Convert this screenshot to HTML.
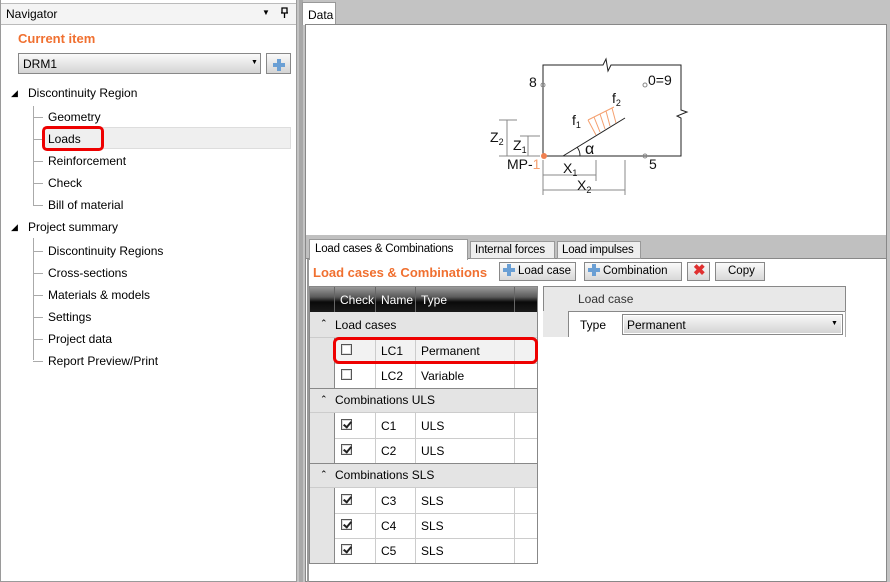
<!DOCTYPE html>
<html><head><meta charset="utf-8"><style>
*{box-sizing:border-box;margin:0;padding:0}
body{width:890px;height:582px;background:#c3c3c3;font-family:"Liberation Sans",sans-serif;font-size:12px;color:#000;position:relative;overflow:hidden}
.a{position:absolute;white-space:nowrap}
.hdr{background:linear-gradient(#9a9a9a,#5a5a5a 40%,#0a0a0a 60%,#1a1a1a)}
.cb{position:absolute;width:11px;height:11px;border:1px solid #555;background:#fff;box-shadow:inset 0 0 0 1px #ddd}
.cb.c::after{content:"";position:absolute;left:3px;top:0px;width:3px;height:6px;border:solid #222;border-width:0 2px 2px 0;transform:rotate(40deg)}
.btn{position:absolute;height:19px;border:1px solid #888;background:linear-gradient(#fafafa,#d8d8d8);font-size:11.5px;line-height:17px;padding-left:3px}
.plus{display:inline-block;position:relative;width:12px;height:12px;vertical-align:-2px;margin-right:3px}
.plus::before{content:"";position:absolute;left:4px;top:0;width:4px;height:12px;background:#6a9fd4}
.plus::after{content:"";position:absolute;left:0;top:4px;width:12px;height:4px;background:#6a9fd4}
.tab{font-size:11.5px;letter-spacing:-0.2px}
</style></head><body>
<!-- Navigator -->
<div class="a" style="left:0;top:0;width:297px;height:582px;background:#fff;border:1px solid #9a9a9a;border-top:none"></div>
<div class="a" style="left:1px;top:3px;width:295px;height:22px;background:#f4f4f4;border:1px solid #bbb;border-left:none;border-right:none"></div>
<div class="a" style="left:6px;top:7px">Navigator</div>
<div class="a" style="left:262px;top:8px;font-size:8px">▼</div>
<svg class="a" style="left:280px;top:7px" width="10" height="12"><path d="M2 1H7V6H2ZM1 6H8M4.5 6V11" fill="none" stroke="#000" stroke-width="1.3"/></svg>
<div class="a" style="left:18px;top:31px;color:#f07030;font-weight:bold;font-size:13px">Current item</div>
<div class="a" style="left:18px;top:53px;width:243px;height:21px;border:1px solid #888;background:linear-gradient(#fafafa,#d4d4d4);padding:3px 0 0 4px">DRM1</div>
<div class="a" style="left:251px;top:59px;font-size:7px">▼</div>
<div class="a" style="left:266px;top:53px;width:25px;height:21px;border:1px solid #888;background:linear-gradient(#fafafa,#d4d4d4);padding:4px 0 0 6px"><span class="plus"></span></div>
<div class="a" style="left:11px;top:88px;font-size:9px">◢</div>
<div class="a" style="left:28px;top:86px">Discontinuity Region</div>
<div class="a" style="left:33px;top:106px;width:1px;height:99px;background:#aaa"></div>
<div class="a" style="left:33px;top:117px;width:10px;height:1px;background:#aaa"></div>
<div class="a" style="left:33px;top:139px;width:10px;height:1px;background:#aaa"></div>
<div class="a" style="left:33px;top:161px;width:10px;height:1px;background:#aaa"></div>
<div class="a" style="left:33px;top:183px;width:10px;height:1px;background:#aaa"></div>
<div class="a" style="left:33px;top:205px;width:10px;height:1px;background:#aaa"></div>
<div class="a" style="left:43px;top:127px;width:248px;height:22px;background:#efefef;border:1px solid #ddd"></div>
<div class="a" style="left:48px;top:110px">Geometry</div>
<div class="a" style="left:42px;top:126px;width:62px;height:25px;border:3px solid #e00;border-radius:5px"></div>
<div class="a" style="left:48px;top:132px">Loads</div>
<div class="a" style="left:48px;top:154px">Reinforcement</div>
<div class="a" style="left:48px;top:176px">Check</div>
<div class="a" style="left:48px;top:198px">Bill of material</div>
<div class="a" style="left:11px;top:222px;font-size:9px">◢</div>
<div class="a" style="left:28px;top:220px">Project summary</div>
<div class="a" style="left:33px;top:238px;width:1px;height:122px;background:#aaa"></div>
<div class="a" style="left:33px;top:251px;width:10px;height:1px;background:#aaa"></div>
<div class="a" style="left:33px;top:273px;width:10px;height:1px;background:#aaa"></div>
<div class="a" style="left:33px;top:295px;width:10px;height:1px;background:#aaa"></div>
<div class="a" style="left:33px;top:317px;width:10px;height:1px;background:#aaa"></div>
<div class="a" style="left:33px;top:339px;width:10px;height:1px;background:#aaa"></div>
<div class="a" style="left:33px;top:361px;width:10px;height:1px;background:#aaa"></div>
<div class="a" style="left:48px;top:244px">Discontinuity Regions</div>
<div class="a" style="left:48px;top:266px">Cross-sections</div>
<div class="a" style="left:48px;top:288px">Materials &amp; models</div>
<div class="a" style="left:48px;top:310px">Settings</div>
<div class="a" style="left:48px;top:332px">Project data</div>
<div class="a" style="left:48px;top:354px">Report Preview/Print</div>
<!-- right -->
<div class="a" style="left:299px;top:0;width:4px;height:582px;background:#a8a8a8"></div>
<div class="a" style="left:302px;top:2px;width:34px;height:23px;background:#fff;border:1px solid #999;border-bottom:none;padding:5px 0 0 5px">Data</div>
<div class="a" style="left:305px;top:24px;width:582px;height:558px;background:#fff;border:1px solid #888"></div>
<div class="a" style="left:306px;top:235px;width:580px;height:6px;background:#c0c0c0"></div>
<div class="a" style="left:306px;top:241px;width:580px;height:18px;background:#c0c0c0;border-bottom:1px solid #888"></div>
<div class="a tab" style="left:309px;top:239px;width:159px;height:21px;background:#fff;border:1px solid #999;border-bottom:none;padding:3px 0 0 5px">Load cases &amp; Combinations</div>
<div class="a tab" style="left:470px;top:241px;width:85px;height:18px;background:#eee;border:1px solid #999;padding:2px 0 0 4px">Internal forces</div>
<div class="a tab" style="left:557px;top:241px;width:84px;height:18px;background:#eee;border:1px solid #999;padding:2px 0 0 4px">Load impulses</div>
<div class="a" style="left:307px;top:259px;width:2px;height:323px;background:#999"></div>
<svg class="a" style="left:0;top:0" width="890" height="240">
<g fill="none" stroke="#222" stroke-width="1">
<path d="M543 65H603l3-6 2 12 3-6H681V110l6 2-10 4 4 2V156H543Z"/>
<path d="M563 156L625 118"/>
<path d="M577 147A14 14 0 0 1 580 156"/>
</g>
<g stroke="#888" fill="none">
<circle cx="543" cy="85" r="2"/><circle cx="645" cy="85" r="2"/><circle cx="645" cy="156" r="2"/>
<path d="M543 160V195M596 160V181M625 160V195M543 175H596M543 190H625M499 120H517M507 120V156M520 136H540M528 136V156M499 156H540"/>
</g>
<g stroke="#f5a070" fill="none">
<path d="M588 120L614 107M588 120L596 135M594 117L600 132M600 114L605 129M606 111L610 126M612 108L616 123"/>
</g>
<circle cx="544" cy="156" r="3" fill="#f08050"/>
<g font-family="Liberation Sans,sans-serif" font-size="14" fill="#111">
<text x="529" y="87">8</text><text x="648" y="85">0=9</text><text x="649" y="169">5</text>
<text x="572" y="125">f<tspan font-size="9" dy="3">1</tspan></text>
<text x="612" y="103">f<tspan font-size="9" dy="3">2</tspan></text>
<text x="585" y="154" font-size="16">α</text>
<text x="490" y="142">Z<tspan font-size="9" dy="3">2</tspan></text>
<text x="513" y="150">Z<tspan font-size="9" dy="3">1</tspan></text>
<text x="507" y="169">MP-<tspan fill="#f5a070">1</tspan></text>
<text x="563" y="173">X<tspan font-size="9" dy="3">1</tspan></text>
<text x="577" y="190">X<tspan font-size="9" dy="3">2</tspan></text>
</g>
</svg>
<div class="a" style="left:313px;top:265px;color:#f07030;font-weight:bold;font-size:13px">Load cases &amp; Combinations</div>
<div class="btn" style="left:499px;top:262px;width:77px"><span class="plus"></span>Load case</div>
<div class="btn" style="left:584px;top:262px;width:98px"><span class="plus"></span>Combination</div>
<div class="btn" style="left:687px;top:262px;width:23px;color:#e03030;font-weight:bold;font-size:15px;line-height:16px;padding-left:5px">✖</div>
<div class="btn" style="left:715px;top:262px;width:50px;padding-left:12px">Copy</div>
<!-- grid -->
<div class="a" style="left:309px;top:286px;width:229px;height:278px;border:1px solid #888;background:#fff"></div>
<div class="a hdr" style="left:310px;top:287px;width:227px;height:25px"></div>
<div class="a" style="left:334px;top:287px;width:1px;height:25px;background:#666"></div>
<div class="a" style="left:375px;top:287px;width:1px;height:25px;background:#666"></div>
<div class="a" style="left:415px;top:287px;width:1px;height:25px;background:#666"></div>
<div class="a" style="left:514px;top:287px;width:1px;height:25px;background:#666"></div>
<div class="a" style="left:340px;top:293px;color:#fff">Check</div>
<div class="a" style="left:381px;top:293px;color:#fff">Name</div>
<div class="a" style="left:421px;top:293px;color:#fff">Type</div>
<div class="a" style="left:310px;top:312px;width:24px;height:251px;background:#e4e4e4"></div>
<div class="a" style="left:310px;top:312px;width:227px;height:26px;background:#e4e4e4;border-bottom:1px solid #ccc"></div>
<div class="a" style="left:310px;top:388px;width:227px;height:25px;background:#e4e4e4;border-top:1px solid #888;border-bottom:1px solid #ccc"></div>
<div class="a" style="left:310px;top:463px;width:227px;height:25px;background:#e4e4e4;border-top:1px solid #888;border-bottom:1px solid #ccc"></div>
<div class="a" style="left:320px;top:318px;font-size:9px">⌃</div><div class="a" style="left:335px;top:318px">Load cases</div>
<div class="a" style="left:320px;top:394px;font-size:9px">⌃</div><div class="a" style="left:335px;top:393px">Combinations ULS</div>
<div class="a" style="left:320px;top:469px;font-size:9px">⌃</div><div class="a" style="left:335px;top:468px">Combinations SLS</div>
<!-- rows -->
<div class="a" style="left:334px;top:338px;width:203px;height:25px;background:#f2f2f2"></div>
<div class="a" style="left:334px;top:338px;width:1px;height:50px;background:#888"></div>
<div class="a" style="left:334px;top:413px;width:1px;height:50px;background:#888"></div>
<div class="a" style="left:334px;top:488px;width:1px;height:75px;background:#888"></div>
<div class="a" style="left:375px;top:338px;width:1px;height:50px;background:#ccc"></div><div class="a" style="left:415px;top:338px;width:1px;height:50px;background:#ccc"></div><div class="a" style="left:514px;top:338px;width:1px;height:50px;background:#ccc"></div>
<div class="a" style="left:375px;top:413px;width:1px;height:50px;background:#ccc"></div><div class="a" style="left:415px;top:413px;width:1px;height:50px;background:#ccc"></div><div class="a" style="left:514px;top:413px;width:1px;height:50px;background:#ccc"></div>
<div class="a" style="left:375px;top:488px;width:1px;height:75px;background:#ccc"></div><div class="a" style="left:415px;top:488px;width:1px;height:75px;background:#ccc"></div><div class="a" style="left:514px;top:488px;width:1px;height:75px;background:#ccc"></div>
<div class="a" style="left:335px;top:363px;width:202px;height:1px;background:#ccc"></div>
<div class="a" style="left:335px;top:438px;width:202px;height:1px;background:#ccc"></div>
<div class="a" style="left:335px;top:513px;width:202px;height:1px;background:#ccc"></div>
<div class="a" style="left:335px;top:538px;width:202px;height:1px;background:#ccc"></div>
<div class="cb" style="left:341px;top:344px"></div><div class="a" style="left:381px;top:344px">LC1</div><div class="a" style="left:421px;top:344px">Permanent</div>
<div class="a" style="left:333px;top:337px;width:205px;height:27px;border:3px solid #e00;border-radius:6px"></div>
<div class="cb" style="left:341px;top:369px"></div><div class="a" style="left:381px;top:369px">LC2</div><div class="a" style="left:421px;top:369px">Variable</div>
<div class="cb c" style="left:341px;top:419px"></div><div class="a" style="left:381px;top:419px">C1</div><div class="a" style="left:421px;top:419px">ULS</div>
<div class="cb c" style="left:341px;top:444px"></div><div class="a" style="left:381px;top:444px">C2</div><div class="a" style="left:421px;top:444px">ULS</div>
<div class="cb c" style="left:341px;top:494px"></div><div class="a" style="left:381px;top:494px">C3</div><div class="a" style="left:421px;top:494px">SLS</div>
<div class="cb c" style="left:341px;top:519px"></div><div class="a" style="left:381px;top:519px">C4</div><div class="a" style="left:421px;top:519px">SLS</div>
<div class="cb c" style="left:341px;top:544px"></div><div class="a" style="left:381px;top:544px">C5</div><div class="a" style="left:421px;top:544px">SLS</div>
<!-- property -->
<div class="a" style="left:543px;top:286px;width:303px;height:26px;background:#e8e8e8;border:1px solid #888"></div>
<div class="a" style="left:578px;top:292px;color:#333">Load case</div>
<div class="a" style="left:543px;top:311px;width:25px;height:26px;background:#e8e8e8"></div>
<div class="a" style="left:568px;top:311px;width:1px;height:26px;background:#888"></div>
<div class="a" style="left:845px;top:311px;width:1px;height:26px;background:#aaa"></div>
<div class="a" style="left:580px;top:318px">Type</div>
<div class="a" style="left:622px;top:314px;width:221px;height:21px;border:1px solid #888;box-shadow:inset 0 0 0 1px #fff;background:linear-gradient(#f8f8f8,#d2d2d2);padding:3px 0 0 4px">Permanent</div>
<div class="a" style="left:831px;top:320px;font-size:7px">▼</div>
</body></html>
